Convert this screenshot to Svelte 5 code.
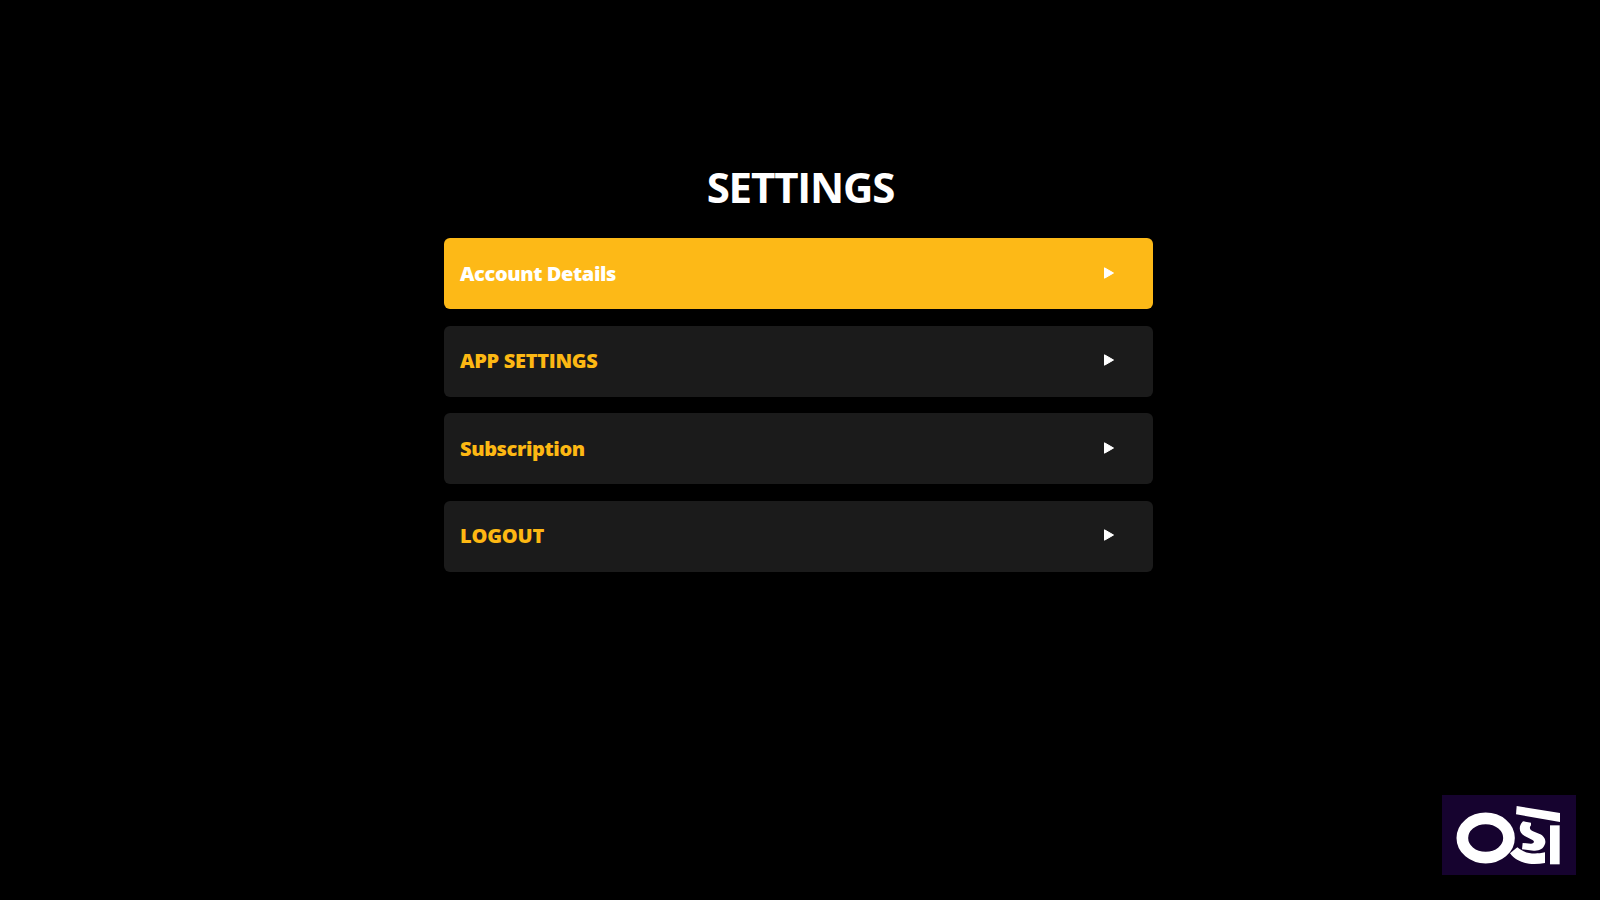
<script>
	let selected = $state(0);

	const items = [
		{ label: 'Account Details', spacing: '-0.4px' },
		{ label: 'APP SETTINGS', spacing: '-0.3px' },
		{ label: 'Subscription', spacing: '-0.4px' },
		{ label: 'LOGOUT', spacing: '-0.2px' }
	];
</script>

<main class="screen">
	<h1 class="title">SETTINGS</h1>

	<nav class="menu" aria-label="Settings">
		{#each items as item, index}
			<button
				class="menu-item"
				class:active={selected === index}
				type="button"
				onclick={() => (selected = index)}
			>
				<span class="label" style="letter-spacing: {item.spacing}">{item.label}</span>
				<svg class="arrow" viewBox="0 0 12 14" aria-hidden="true">
					<path d="M1.5 1.8 L10.5 7 L1.5 12.2 Z" />
				</svg>
			</button>
		{/each}
	</nav>

	<!-- Brand mark -->
	<div class="logo">
		<svg viewBox="0 0 402 240" role="img" aria-label="OSI">
			<ellipse cx="131" cy="129" rx="70" ry="59" />
			<path d="M224 33 L354 54 V81 L222 58 Z" />
			<path d="M324 91 H353 V208 H324 Z" />
			<path d="M243 79 L267 83 V91 C261 97 263 104 273 109 L293 117 C306 122 313 135 309 147 C304 162 292 168 275 167 L240 163 L242 144 L267 146 C277 146 279 138 270 134 L248 123 C231 114 228 94 243 79 Z" />
			<path d="M204 175 L226 157 C246 174 272 180 309 172 V204 C270 212 228 207 204 175 Z" />
		</svg>
	</div>
</main>

<style>
	:global(body) {
		margin: 0;
		background: #000;
	}

	.screen {
		position: relative;
		display: flex;
		flex-direction: column;
		align-items: center;
		box-sizing: border-box;
		width: 100%;
		height: 100vh;
		padding: 157px 4px 0 0;
		overflow: hidden;
		background: #000;
		font-family: 'Open Sans', 'Noto Sans', sans-serif;
	}

	.title {
		margin: 0 0 21px 5px;
		color: #fff;
		font-size: 42px;
		font-weight: 700;
		line-height: 60px;
		letter-spacing: -1.15px;
	}

	.menu {
		display: flex;
		flex-direction: column;
		gap: 16.5px;
		width: 709px;
	}

	.menu-item {
		display: flex;
		align-items: center;
		justify-content: space-between;
		box-sizing: border-box;
		height: 71px;
		padding: 0 38px 0 16.5px;
		border: none;
		border-radius: 6px;
		background: #1b1b1b;
		color: #fdb813;
		font-family: inherit;
		font-size: 20px;
		font-weight: 800;
		line-height: 28px;
		cursor: pointer;
	}

	.menu-item.active {
		background: #fdb917;
		color: #fff;
	}

	.arrow {
		width: 12px;
		height: 14px;
		margin-bottom: 2px;
		fill: #fff;
		stroke: #fff;
		stroke-width: 1;
		stroke-linejoin: round;
	}

	/* Pinned over the bottom right corner of the screen */
	.logo {
		position: absolute;
		right: 24px;
		bottom: 25px;
		width: 134px;
		height: 80px;
		background: #16032f;
	}

	.logo svg {
		display: block;
		width: 100%;
		height: 100%;
		fill: #fff;
	}

	.logo ellipse {
		fill: none;
		stroke: #fff;
		stroke-width: 35;
	}
</style>
